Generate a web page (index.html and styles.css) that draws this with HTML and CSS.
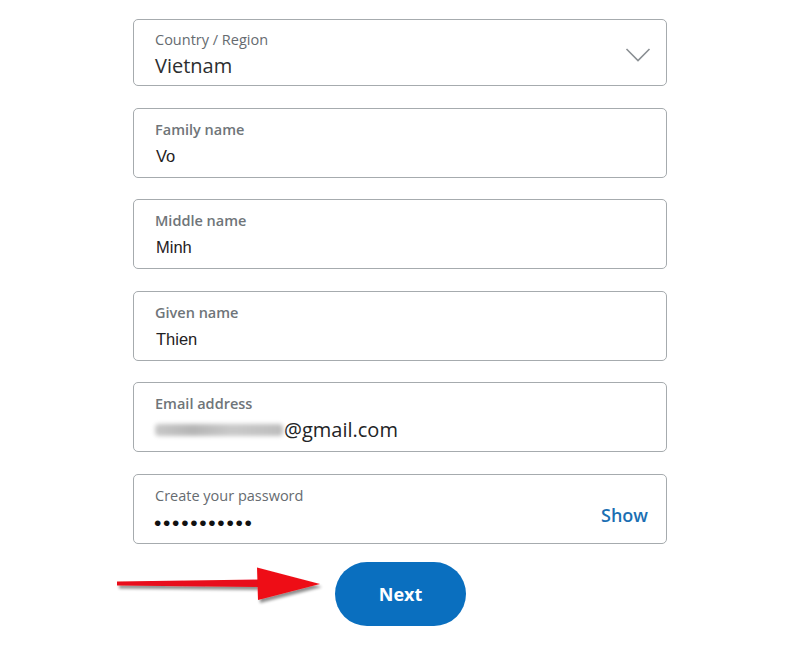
FILE: index.html
```html
<!DOCTYPE html>
<html lang="en">
<head>
<meta charset="utf-8">
<title>Sign up</title>
<link rel="stylesheet" href="styles.css">
</head>
<body>
<form class="form">
  <div class="field field-select">
    <div class="field-body">
      <span class="label">Country / Region</span>
      <span class="value value-lg">Vietnam</span>
    </div>
    <svg class="chevron" width="26" height="16" viewBox="0 0 26 16"><path d="M1.5 2 L13 13.5 L24.5 2" fill="none" stroke="#8a8f93" stroke-width="1.6"/></svg>
  </div>
  <div class="field">
    <div class="field-body">
      <span class="label label-strong">Family name</span>
      <span class="value">Vo</span>
    </div>
  </div>
  <div class="field">
    <div class="field-body">
      <span class="label label-strong">Middle name</span>
      <span class="value">Minh</span>
    </div>
  </div>
  <div class="field">
    <div class="field-body">
      <span class="label label-strong">Given name</span>
      <span class="value">Thien</span>
    </div>
  </div>
  <div class="field">
    <div class="field-body">
      <span class="label label-strong">Email address</span>
      <span class="value value-lg value-email"><span class="blur"></span>@gmail.com</span>
    </div>
  </div>
  <div class="field">
    <div class="field-body">
      <span class="label">Create your password</span>
      <span class="dots">•••••••••••</span>
    </div>
    <span class="show">Show</span>
  </div>
  <div class="actions">
    <svg class="arrow" width="215" height="50" viewBox="0 0 215 50">
      <defs>
        <filter id="sh" x="-10%" y="-30%" width="130%" height="180%">
          <feGaussianBlur in="SourceAlpha" stdDeviation="1.6"/>
          <feOffset dx="2" dy="3" result="b"/>
          <feComponentTransfer><feFuncA type="linear" slope="0.45"/></feComponentTransfer>
          <feMerge><feMergeNode/><feMergeNode in="SourceGraphic"/></feMerge>
        </filter>
      </defs>
      <g filter="url(#sh)">
        <path d="M1 17.5 L143 15.5 L143 23 L1 21.5 Z" fill="#e8101a"/>
        <path d="M141 3.5 L204 20 L142 36 Z" fill="#ee1119"/>
      </g>
    </svg>
    <button type="button" class="btn">Next</button>
  </div>
</form>
</body>
</html>
```

FILE: styles.css
```css
html, body {
  margin: 0;
  padding: 0;
  background: #ffffff;
}

body {
  font-family: "Open Sans", "Liberation Sans", sans-serif;
  color: #2c2e2f;
}

.form {
  width: 534px;
  margin: 19px auto 0;
  display: flex;
  flex-direction: column;
  gap: 21.5px;
}

.field {
  box-sizing: border-box;
  height: 70px;
  border: 1.5px solid #a6abae;
  border-radius: 5px;
  display: flex;
  align-items: center;
  padding: 0 17px 0 21px;
}

.field-select {
  height: 67px;
}

.field-body {
  flex: 1;
  display: flex;
  flex-direction: column;
  align-self: flex-start;
  padding-top: 11px;
}

.label {
  font-size: 14.5px;
  line-height: 20px;
  color: #666b70;
  font-weight: 400;
}

.label-strong {
  font-weight: 600;
  color: #6f7579;
}

.field-select .field-body {
  padding-top: 10px;
}

.value {
  font-family: "Liberation Sans", Arial, sans-serif;
  font-size: 16.5px;
  line-height: 32px;
  color: #1f2123;
  padding-left: 1px;
}

.value-lg {
  font-family: "Open Sans", "Liberation Sans", sans-serif;
  font-size: 20px;
  line-height: 32px;
  padding-left: 0;
  color: #2c2e2f;
}

.value-email {
  display: flex;
  align-items: center;
  font-weight: 500;
  color: #222426;
}

.blur {
  display: inline-block;
  width: 128px;
  height: 12px;
  margin-right: 1px;
  background: linear-gradient(90deg, #c8c8c8 0%, #b5b5b5 30%, #c9c9c9 60%, #bdbdbd 100%);
  filter: blur(2px);
  border-radius: 4px;
}

.dots {
  font-family: "Liberation Sans", Arial, sans-serif;
  font-size: 21px;
  line-height: 34px;
  letter-spacing: 1.7px;
  color: #111;
  margin-left: -1px;
}

.show {
  font-size: 18px;
  font-weight: 600;
  color: #1b6fb3;
  margin-top: 12px;
  margin-right: 1px;
}

.chevron {
  margin-top: 5px;
  margin-right: -2px;
}

.actions {
  position: relative;
  display: flex;
  justify-content: center;
  margin-top: -3.5px;
}

.arrow {
  position: absolute;
  left: -17px;
  top: 2px;
}

.btn {
  width: 131px;
  height: 64px;
  border: none;
  border-radius: 32px;
  background: #0a6fbf;
  color: #ffffff;
  font-family: "Open Sans", "Liberation Sans", sans-serif;
  font-size: 18px;
  font-weight: 700;
  padding: 0;
  margin-left: 1px;
}
```
